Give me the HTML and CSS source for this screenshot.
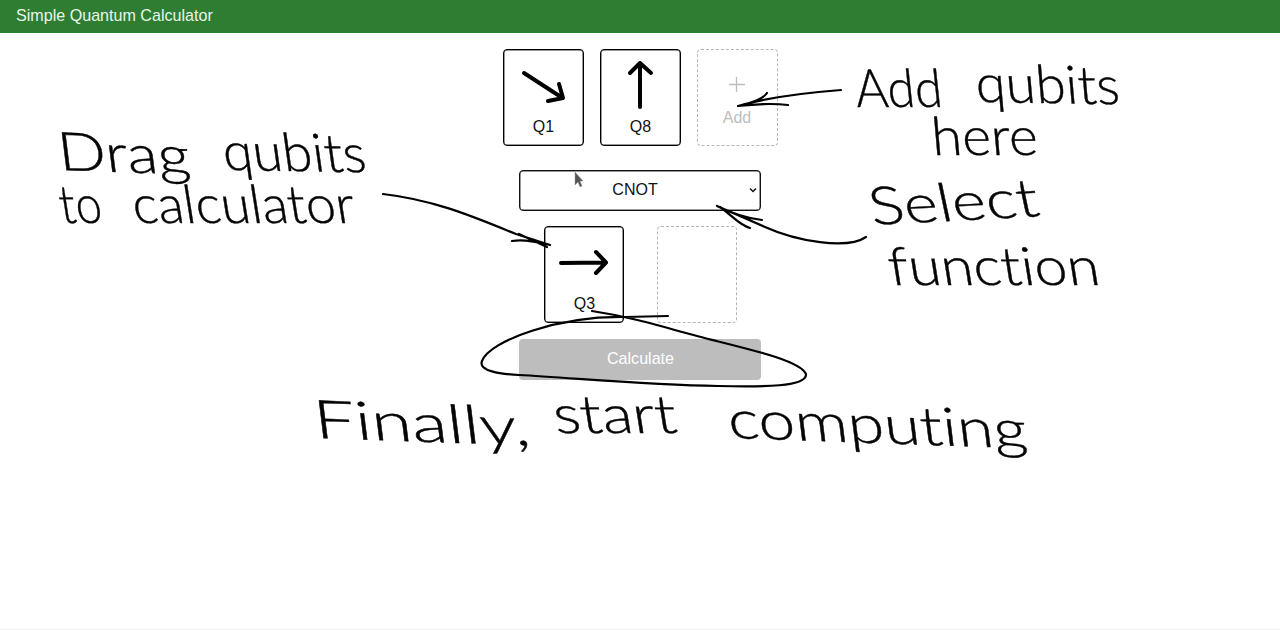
FILE: index.html
```html
<!DOCTYPE html>
<html lang="en">
<head>
<meta charset="utf-8">
<title>Simple Quantum Calculator</title>
<link rel="stylesheet" href="styles.css">
</head>
<body>
<header class="bar">Simple Quantum Calculator</header>
<main class="app">
  <section class="qubits">
    <div class="card">
      <svg class="arrow" viewBox="0 0 60 50"><path d="M11 13 48 37M46 24 50 38 35 41"/></svg>
      <span class="label">Q1</span>
    </div>
    <div class="card">
      <svg class="arrow" viewBox="0 0 60 50"><path d="M30 47V3M20 13 30 3 41 13"/></svg>
      <span class="label">Q8</span>
    </div>
    <div class="card add">
      <svg class="plus" viewBox="0 0 60 50"><path d="M22 24.5H38M29.5 17V32"/></svg>
      <span class="label">Add</span>
    </div>
  </section>
  <div class="select">
    <span>CNOT</span>
    <svg class="chevron" viewBox="0 0 8 6"><path d="M1 1.5 4 4.5 7 1.5"/></svg>
  </div>
  <section class="slots">
    <div class="card">
      <svg class="arrow" viewBox="0 0 60 50"><path d="M7 26 51 25.500M42 15 52 25.500 42 36"/></svg>
      <span class="label">Q3</span>
    </div>
    <div class="card add"></div>
  </section>
  <button class="calculate">Calculate</button>
</main>
<svg class="notes" viewBox="0 0 1280 630">
  <g class="ink">
    <path d="M383 194C435 200 474 217 516 234L550 245M512 241C523 239 534 241 550 245M519 234 547 247"/>
    <path d="M841 90C802 93 769 97 738 106M767 93C763 99 754 102 738 106C756 104 772 103 788 105"/>
    <path d="M866 237C847 250 796 241 765 227L717 206M717 206C729 212 743 218 762 220M720 207C734 217 739 225 750 228"/>
    <path d="M592 311C625 316 650 323 682 332C728 345 799 358 806 374C807 387 763 387 718 386C647 385 575 378 519 375C500 374 478 371 482 361C490 340 560 316 625 317L668 316"/>
  </g>
  <g class="script">
    <text transform="translate(60 170) rotate(2) skewX(9)" textLength="132" lengthAdjust="spacingAndGlyphs">Drag</text>
    <text transform="translate(225 170) rotate(1) skewX(9)" textLength="143" lengthAdjust="spacingAndGlyphs">qubits</text>
    <text transform="translate(62 223) skewX(9)" textLength="42" lengthAdjust="spacingAndGlyphs">to</text>
    <text transform="translate(135 223) skewX(9)" textLength="222" lengthAdjust="spacingAndGlyphs">calculator</text>
    <text transform="translate(857 107) skewX(6)" textLength="87" lengthAdjust="spacingAndGlyphs">Add</text>
    <text transform="translate(977 102) rotate(1) skewX(6)" textLength="144" lengthAdjust="spacingAndGlyphs">qubits</text>
    <text transform="translate(933 155) skewX(5)" textLength="106" lengthAdjust="spacingAndGlyphs">here</text>
    <text transform="translate(873 225) rotate(-3) skewX(9)" textLength="169" lengthAdjust="spacingAndGlyphs">Select</text>
    <text transform="translate(891 285) skewX(9)" textLength="211" lengthAdjust="spacingAndGlyphs">function</text>
    <text transform="translate(316 438) rotate(2) skewX(9)" textLength="216" lengthAdjust="spacingAndGlyphs">Finally,</text>
    <text transform="translate(556 433) skewX(9)" textLength="123" lengthAdjust="spacingAndGlyphs">start</text>
    <text transform="translate(730 438) rotate(2) skewX(9)" textLength="299" lengthAdjust="spacingAndGlyphs">computing</text>
  </g>
  <path class="cursor" d="M575 172V185L578 182 580 187 582 186 580 181 583 181Z"/>
</svg>
</body>
</html>
```
FILE: styles.css
```css
* { box-sizing: border-box; }
body {
  margin: 0;
  height: 630px;
  overflow: hidden;
  position: relative;
  background: #fff;
  border-bottom: 1px solid #eee;
  color: #111;
  font: 16px/18px "Liberation Sans", Arial, sans-serif;
}
.bar {
  height: 33px;
  padding: 6px 16px;
  background: #2e7d32;
  color: #e8f5e9;
  font-size: 16.1px;
}
.app {
  display: flex;
  flex-direction: column;
  align-items: center;
  padding-top: 16px;
}
.qubits, .slots { display: flex; }
.qubits { gap: 16px; margin-bottom: 24px; }
.slots { gap: 33px; margin: 15px 0 16px 1px; }
.card {
  width: 81px;
  height: 97px;
  border: 1px solid #000;
  box-shadow: inset 0 0 0 .5px #333;
  border-radius: 4px;
  display: flex;
  flex-direction: column;
  align-items: center;
  padding-top: 10px;
}
.slots .card { width: 80px; }
.card.add { border: 1px dashed #b5b5b5; box-shadow: none; color: #bdbdbd; }
.arrow, .plus { width: 60px; height: 50px; fill: none; }
.arrow { stroke: #000; stroke-width: 4; stroke-linecap: round; stroke-linejoin: round; }
.plus { stroke: #bdbdbd; stroke-width: 1.3; }
.label { margin-top: 8px; padding-left: 1px; }
.add .label { margin-top: -1px; padding-left: 0; }
.select {
  width: 242px;
  height: 41px;
  border: 1px solid #111;
  box-shadow: inset 0 0 0 .5px #333;
  border-radius: 4px;
  display: flex;
  align-items: center;
  padding: 0 3px 1px 1px;
}
.select span { flex: 1; text-align: center; }
.chevron { width: 8px; height: 6px; fill: none; stroke: #111; stroke-width: 1.5; }
.calculate {
  width: 242px;
  height: 41px;
  padding: 0 0 3px 1px;
  border: 0;
  border-radius: 4px;
  background: #bdbdbd;
  color: #fff;
  font: inherit;
  font-size: 16.1px;
}
/* Handwritten-style annotations lie over the app */
.notes { position: absolute; inset: 0; width: 1280px; height: 630px; pointer-events: none; }
.ink { fill: none; stroke: #000; stroke-width: 2.2; stroke-linecap: round; stroke-linejoin: round; }
.script {
  font: 300 53px Lato, "Open Sans", sans-serif;
  font-variant-ligatures: none;
  fill: #050505;
  stroke: #050505;
  stroke-width: .4;
}
.cursor { fill: #555; stroke: #999; stroke-width: .5; }
```
